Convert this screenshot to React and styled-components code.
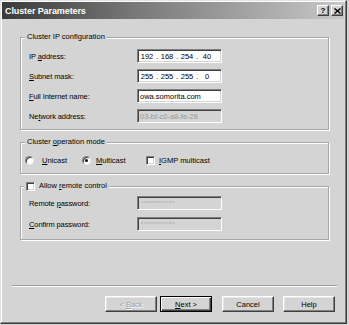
import React from 'react';
import styled, { createGlobalStyle } from 'styled-components';

const GlobalStyle = createGlobalStyle`
  html, body {
    margin: 0;
    padding: 0;
    background: #d6d6d6;
  }
  body {
    font-family: "Liberation Sans", Arial, sans-serif;
    font-size: 7.5px;
    color: #000;
  }
`;

const Window = styled.div`
  width: 347px;
  height: 324px;
  box-sizing: border-box;
  background: #d4d4d4;
  border-top: 1px solid #e2e2e2;
  border-left: 1px solid #e2e2e2;
  border-right: 1px solid #3a3a3a;
  border-bottom: 1px solid #3a3a3a;
  box-shadow: inset -1px -1px #808080, inset 1px 1px #fff;
  padding: 1px 2px 2px 1px;
  display: flex;
  flex-direction: column;
`;

const TitleBar = styled.div`
  height: 17px;
  flex: none;
  display: flex;
  align-items: center;
  padding: 0 1px 0 3px;
  background: linear-gradient(to right, #3a3a3a 0%, #7a7a7a 40%, #c8c8c8 100%);
`;

const Title = styled.div`
  flex: 1;
  color: #fff;
  font-weight: bold;
  font-size: 9px;
  letter-spacing: -0.1px;
`;

const TitleButton = styled.div`
  width: 12px;
  height: 11px;
  box-sizing: border-box;
  margin-left: ${p => p.$gap || 0}px;
  background: #d4d4d4;
  border: 1px solid;
  border-color: #fff #404040 #404040 #fff;
  box-shadow: inset -1px -1px #808080;
  display: flex;
  align-items: center;
  justify-content: center;
  font-weight: bold;
  font-size: 8px;
  line-height: 8px;
  color: #000;
`;

const Body = styled.div`
  flex: 1;
  display: flex;
  flex-direction: column;
  padding: 13px 7px 9px 10px;
`;

const Groups = styled.div`
  margin: 0 8px;
  display: flex;
  flex-direction: column;
  gap: 7px;
`;

const Group = styled.fieldset`
  margin: 0;
  min-width: 0;
  padding: ${p => p.$pad};
  border: 1px solid #a6a6a6;
  box-shadow: inset 1px 1px #fff, 1px 1px #fff;
  display: flex;
  flex-direction: column;
  gap: ${p => p.$gap || 6}px;
`;

const Legend = styled.legend`
  margin-left: ${p => p.$shift || 0}px;
  padding: 0 2px;
  line-height: 10px;
  height: 10px;
  background: #d4d4d4;
  display: flex;
  align-items: center;
  gap: 4px;
`;

const Row = styled.div`
  display: grid;
  grid-template-columns: 108px 85px;
  align-items: center;
  height: 14px;
  letter-spacing: -0.1px;
`;

const Field = styled.div`
  height: 14px;
  box-sizing: border-box;
  background: ${p => (p.$disabled ? '#d4d4d4' : '#fff')};
  color: ${p => (p.$disabled ? '#9a9a9a' : '#000')};
  border: 1px solid;
  border-color: #808080 #fff #fff #808080;
  box-shadow: inset 1px 1px #404040, inset -1px -1px #d4d4d4;
  padding: 0 2px;
  display: flex;
  align-items: center;
  white-space: nowrap;
  overflow: hidden;
  letter-spacing: 0;
`;

const IpSeg = styled.span`
  width: 14px;
  text-align: center;
`;

const IpDot = styled.span`
  width: 6px;
  text-align: center;
`;

const Mask = styled.span`
  font-size: 6px;
  letter-spacing: 0.5px;
  color: #a8a8a8;
  padding-left: 1px;
`;

const OptionRow = styled.div`
  display: flex;
  align-items: center;
  height: 10px;
`;

const Option = styled.label`
  display: flex;
  align-items: center;
  width: ${p => (p.$w ? `${p.$w}px` : 'auto')};
  gap: ${p => p.$gap || 6}px;
`;

const Radio = styled.span`
  width: 9px;
  height: 9px;
  box-sizing: border-box;
  border-radius: 50%;
  background: #fff;
  border: 1px solid;
  border-color: #808080 #e8e8e8 #e8e8e8 #808080;
  box-shadow: inset 1px 1px #404040;
  display: flex;
  align-items: center;
  justify-content: center;
  &::after {
    content: '';
    width: 3px;
    height: 3px;
    border-radius: 50%;
    background: ${p => (p.$on ? '#000' : 'transparent')};
  }
`;

const Check = styled.span`
  width: 9px;
  height: 9px;
  box-sizing: border-box;
  background: #fff;
  border: 1px solid;
  border-color: #808080 #fff #fff #808080;
  box-shadow: inset 1px 1px #404040, inset -1px -1px #d4d4d4;
`;

const Key = styled.u`
  text-decoration: underline;
  text-underline-offset: 1px;
`;

const Footer = styled.div`
  margin-top: auto;
  display: flex;
  flex-direction: column;
`;

const Separator = styled.div`
  height: 1px;
  background: #9a9a9a;
  border-bottom: 1px solid #fff;
  margin-bottom: 9px;
`;

const Buttons = styled.div`
  display: flex;
  justify-content: flex-end;
  padding-right: 2px;
`;

const Button = styled.div`
  width: 52px;
  height: 16px;
  box-sizing: border-box;
  margin-left: ${p => p.$gap || 0}px;
  background: #d4d4d4;
  border: 1px solid;
  border-color: ${p => (p.$default ? '#000' : '#fff #404040 #404040 #fff')};
  box-shadow: ${p =>
    p.$default
      ? 'inset 1px 1px #fff, inset -1px -1px #404040, inset -2px -2px #808080'
      : 'inset -1px -1px #808080, inset 1px 1px #e6e6e6'};
  display: flex;
  align-items: center;
  justify-content: center;
  white-space: pre;
  color: ${p => (p.$disabled ? '#a0a0a0' : '#000')};
  text-shadow: ${p => (p.$disabled ? '1px 1px #fff' : 'none')};
`;

const CloseIcon = () => (
  <svg width="7" height="6" viewBox="0 0 7 6">
    <path d="M0.5 0.5 L6.5 5.5 M6.5 0.5 L0.5 5.5" stroke="#000" strokeWidth="1.4" />
  </svg>
);

const IpValue = ({ parts }) => (
  <>
    {parts.map((p, i) => (
      <React.Fragment key={i}>
        {i > 0 && <IpDot>.</IpDot>}
        <IpSeg>{p}</IpSeg>
      </React.Fragment>
    ))}
  </>
);

const App = () => {
  return (
    <>
      <GlobalStyle />
      <Window>
        <TitleBar>
          <Title>Cluster Parameters</Title>
          <TitleButton>?</TitleButton>
          <TitleButton $gap={2}><CloseIcon /></TitleButton>
        </TitleBar>
        <Body>
          <Groups>
            <Group $pad="7px 0 6px 8px">
              <Legend $shift={-4}><span>Cluster IP configuration</span></Legend>
              <Row>
                <span>IP <Key>a</Key>ddress:</span>
                <Field><IpValue parts={['192', '168', '254', '40']} /></Field>
              </Row>
              <Row>
                <span><Key>S</Key>ubnet mask:</span>
                <Field><IpValue parts={['255', '255', '255', '0']} /></Field>
              </Row>
              <Row>
                <span><Key>F</Key>ull Internet name:</span>
                <Field>owa.somorita.com</Field>
              </Row>
              <Row>
                <span>Ne<Key>t</Key>work address:</span>
                <Field $disabled>03-bf-c0-a8-fe-28</Field>
              </Row>
            </Group>

            <Group $pad="8px 0 8px 4px">
              <Legend><span>Cluster <Key>o</Key>peration mode</span></Legend>
              <OptionRow>
                <Option $w={57} $gap={8}>
                  <Radio />
                  <span><Key>U</Key>nicast</span>
                </Option>
                <Option $w={64} $gap={5}>
                  <Radio $on />
                  <span><Key>M</Key>ulticast</span>
                </Option>
                <Option $gap={4}>
                  <Check />
                  <span><Key>I</Key>GMP multicast</span>
                </Option>
              </OptionRow>
            </Group>

            <Group $pad="5px 0 8px 8px" $gap={7}>
              <Legend $shift={-5}>
                <Check />
                <span>Allow <Key>r</Key>emote control</span>
              </Legend>
              <Row>
                <span>Remote <Key>p</Key>assword:</span>
                <Field $disabled><Mask>************</Mask></Field>
              </Row>
              <Row>
                <span><Key>C</Key>onfirm password:</span>
                <Field $disabled><Mask>************</Mask></Field>
              </Row>
            </Group>
          </Groups>

          <Footer>
            <Separator />
            <Buttons>
              <Button $disabled><span>&lt; <Key>B</Key>ack</span></Button>
              <Button $default $gap={3}><span><Key>N</Key>ext &gt;</span></Button>
              <Button $gap={10}>Cancel</Button>
              <Button $gap={9}>Help</Button>
            </Buttons>
          </Footer>
        </Body>
      </Window>
    </>
  );
};

export default App;
